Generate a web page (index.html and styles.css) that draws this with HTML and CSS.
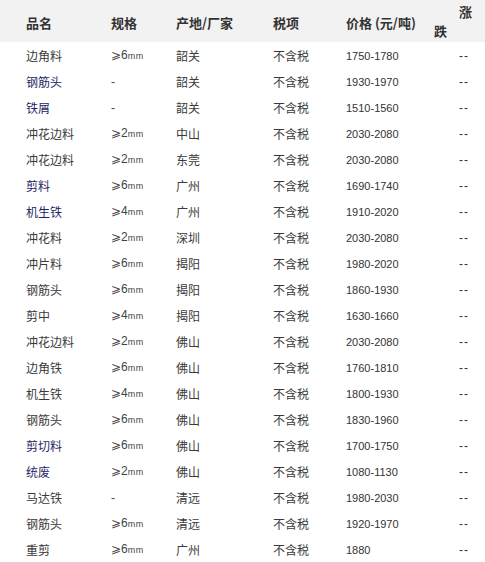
FILE: index.html
```html
<!DOCTYPE html>
<html>
<head>
<meta charset="utf-8">
<link rel="stylesheet" href="styles.css">
</head>
<body>
<div class="table">
  <div class="row head">
    <div class="c">品名</div>
    <div class="c">规格</div>
    <div class="c">产地/厂家</div>
    <div class="c">税项</div>
    <div class="c">价格 (元/吨)</div>
    <div class="c updown"><span class="zhang">涨</span><span class="die">跌</span></div>
  </div>
  <div class="row"><div class="c">边角料</div><div class="c spec">⩾6<small>mm</small></div><div class="c">韶关</div><div class="c">不含税</div><div class="c num">1750-1780</div><div class="c num dash">--</div></div>
  <div class="row"><div class="c navy">钢筋头</div><div class="c spec">-</div><div class="c">韶关</div><div class="c">不含税</div><div class="c num">1930-1970</div><div class="c num dash">--</div></div>
  <div class="row"><div class="c navy">铁屑</div><div class="c spec">-</div><div class="c">韶关</div><div class="c">不含税</div><div class="c num">1510-1560</div><div class="c num dash">--</div></div>
  <div class="row"><div class="c">冲花边料</div><div class="c spec">⩾2<small>mm</small></div><div class="c">中山</div><div class="c">不含税</div><div class="c num">2030-2080</div><div class="c num dash">--</div></div>
  <div class="row"><div class="c">冲花边料</div><div class="c spec">⩾2<small>mm</small></div><div class="c">东莞</div><div class="c">不含税</div><div class="c num">2030-2080</div><div class="c num dash">--</div></div>
  <div class="row"><div class="c navy">剪料</div><div class="c spec">⩾6<small>mm</small></div><div class="c">广州</div><div class="c">不含税</div><div class="c num">1690-1740</div><div class="c num dash">--</div></div>
  <div class="row"><div class="c navy">机生铁</div><div class="c spec">⩾4<small>mm</small></div><div class="c">广州</div><div class="c">不含税</div><div class="c num">1910-2020</div><div class="c num dash">--</div></div>
  <div class="row"><div class="c">冲花料</div><div class="c spec">⩾2<small>mm</small></div><div class="c">深圳</div><div class="c">不含税</div><div class="c num">2030-2080</div><div class="c num dash">--</div></div>
  <div class="row"><div class="c">冲片料</div><div class="c spec">⩾6<small>mm</small></div><div class="c">揭阳</div><div class="c">不含税</div><div class="c num">1980-2020</div><div class="c num dash">--</div></div>
  <div class="row"><div class="c">钢筋头</div><div class="c spec">⩾6<small>mm</small></div><div class="c">揭阳</div><div class="c">不含税</div><div class="c num">1860-1930</div><div class="c num dash">--</div></div>
  <div class="row"><div class="c">剪中</div><div class="c spec">⩾4<small>mm</small></div><div class="c">揭阳</div><div class="c">不含税</div><div class="c num">1630-1660</div><div class="c num dash">--</div></div>
  <div class="row"><div class="c">冲花边料</div><div class="c spec">⩾2<small>mm</small></div><div class="c">佛山</div><div class="c">不含税</div><div class="c num">2030-2080</div><div class="c num dash">--</div></div>
  <div class="row"><div class="c">边角铁</div><div class="c spec">⩾6<small>mm</small></div><div class="c">佛山</div><div class="c">不含税</div><div class="c num">1760-1810</div><div class="c num dash">--</div></div>
  <div class="row"><div class="c">机生铁</div><div class="c spec">⩾4<small>mm</small></div><div class="c">佛山</div><div class="c">不含税</div><div class="c num">1800-1930</div><div class="c num dash">--</div></div>
  <div class="row"><div class="c">钢筋头</div><div class="c spec">⩾6<small>mm</small></div><div class="c">佛山</div><div class="c">不含税</div><div class="c num">1830-1960</div><div class="c num dash">--</div></div>
  <div class="row"><div class="c navy">剪切料</div><div class="c spec">⩾6<small>mm</small></div><div class="c">佛山</div><div class="c">不含税</div><div class="c num">1700-1750</div><div class="c num dash">--</div></div>
  <div class="row"><div class="c navy">统废</div><div class="c spec">⩾2<small>mm</small></div><div class="c">佛山</div><div class="c">不含税</div><div class="c num">1080-1130</div><div class="c num dash">--</div></div>
  <div class="row"><div class="c">马达铁</div><div class="c spec">-</div><div class="c">清远</div><div class="c">不含税</div><div class="c num">1980-2030</div><div class="c num dash">--</div></div>
  <div class="row"><div class="c">钢筋头</div><div class="c spec">⩾6<small>mm</small></div><div class="c">清远</div><div class="c">不含税</div><div class="c num">1920-1970</div><div class="c num dash">--</div></div>
  <div class="row"><div class="c">重剪</div><div class="c spec">⩾6<small>mm</small></div><div class="c">广州</div><div class="c">不含税</div><div class="c num">1880</div><div class="c num dash">--</div></div>
</div>
</body>
</html>
```

FILE: styles.css
```css
html, body {
  margin: 0;
  padding: 0;
  background: #ffffff;
}
body {
  font-family: "Noto Sans CJK SC", "Liberation Sans", sans-serif;
  color: #3a3a3a;
  font-size: 12px;
}
.table {
  width: 485px;
}
.row {
  display: grid;
  grid-template-columns: 85px 65px 97px 73px 113px 26px;
  padding-left: 26px;
  height: 26px;
  align-items: center;
}
.row.head {
  height: 42px;
  background: #f2f2f2;
  font-weight: bold;
  font-size: 13px;
  color: #333333;
}
.c {
  white-space: nowrap;
  line-height: 16px;
  padding-top: 1px;
}
.head .c {
  padding-top: 2px;
}
.navy {
  color: #1f1f66;
}
.spec {
  font-family: "Liberation Sans", sans-serif;
  font-size: 12px;
  color: #444444;
}
.spec small {
  font-size: 9px;
  letter-spacing: 0.5px;
}
.num {
  font-family: "Liberation Sans", sans-serif;
  font-size: 11px;
  color: #333333;
}
.dash {
  font-size: 12px;
  letter-spacing: 1px;
}
.updown {
  position: relative;
  height: 42px;
}
.zhang {
  position: absolute;
  left: 0;
  top: 4px;
}
.die {
  position: absolute;
  left: -25px;
  top: 23px;
}
```
